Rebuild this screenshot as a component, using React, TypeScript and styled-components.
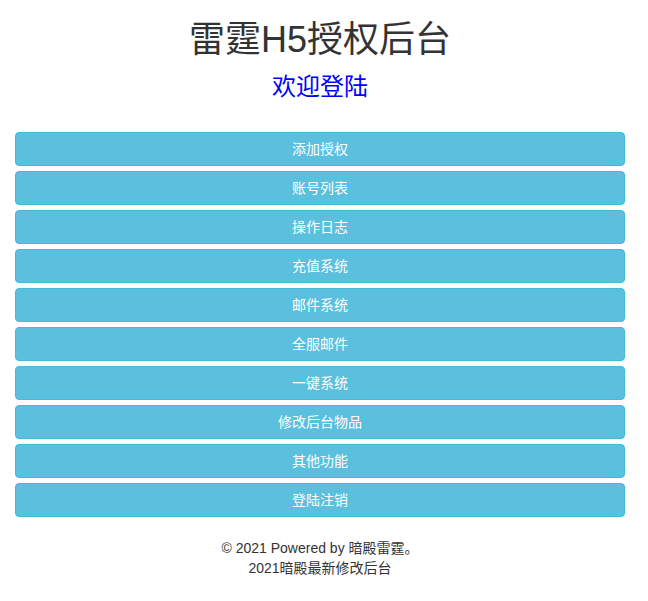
import styled, { createGlobalStyle } from 'styled-components';

const GlobalStyle = createGlobalStyle`
    body {
        margin: 0;
        background: #fff;
        color: #333;
        font-family: 'Liberation Sans', 'Noto Sans CJK SC', sans-serif;
        font-size: 14px;
        line-height: 1.42857;
    }
`;

const Page = styled.div`
    width: 640px;
    padding: 0 15px;
    box-sizing: border-box;
`;

const Title = styled.h1`
    margin: 20px 0 10px;
    font-size: 36px;
    font-weight: 400;
    line-height: 1.1;
    text-align: center;
    color: #333;
`;

const Welcome = styled.div`
    margin: 2px 0 28px;
    font-size: 24px;
    line-height: 34px;
    text-align: center;
    color: #0000ff;
`;

const Menu = styled.nav`
    display: flex;
    flex-direction: column;
    gap: 5px;
`;

const MenuButton = styled.a`
    display: block;
    height: 34px;
    box-sizing: border-box;
    padding: 6px 12px;
    border: 1px solid #46b8da;
    border-radius: 4px;
    background: #5bc0de;
    color: #fff;
    font-size: 14px;
    line-height: 20px;
    text-align: center;
    text-decoration: none;
    cursor: pointer;
`;

const Footer = styled.footer`
    margin-top: 21px;
    text-align: center;
    font-size: 14px;
    line-height: 20px;
    color: #333;
`;

const items = [
    '添加授权',
    '账号列表',
    '操作日志',
    '充值系统',
    '邮件系统',
    '全服邮件',
    '一键系统',
    '修改后台物品',
    '其他功能',
    '登陆注销',
];

export default function App() {
    return (
        <>
            <GlobalStyle />
            <Page>
                <Title>雷霆H5授权后台</Title>
                <Welcome>欢迎登陆</Welcome>
                <Menu>
                    {items.map((label) => (
                        <MenuButton key={label}>{label}</MenuButton>
                    ))}
                </Menu>
                <Footer>
                    <div>© 2021 Powered by 暗殿雷霆。</div>
                    <div>2021暗殿最新修改后台</div>
                </Footer>
            </Page>
        </>
    );
}
